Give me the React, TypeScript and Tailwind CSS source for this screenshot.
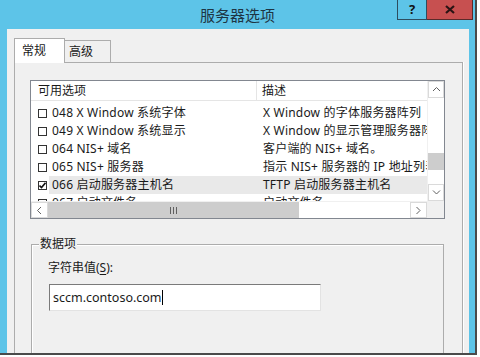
import React from 'react'

interface Row {
  name: string
  desc: string
  checked?: boolean
  selected?: boolean
}

const rows: Row[] = [
  { name: '048 X Window 系统字体', desc: 'X Window 的字体服务器阵列' },
  { name: '049 X Window 系统显示', desc: 'X Window 的显示管理服务器阵列' },
  { name: '064 NIS+ 域名', desc: '客户端的 NIS+ 域名。' },
  { name: '065 NIS+ 服务器', desc: '指示 NIS+ 服务器的 IP 地址列表' },
  { name: '066 启动服务器主机名', desc: 'TFTP 启动服务器主机名', checked: true, selected: true },
  { name: '067 启动文件名', desc: '启动文件名' },
]

function Chevron({ dir }: { dir: 'up' | 'down' | 'left' | 'right' }) {
  const pts = {
    up: '1,5 4.5,1.5 8,5',
    down: '1,1.5 4.5,5 8,1.5',
    left: '5,1 1.5,4.5 5,8',
    right: '1.5,1 5,4.5 1.5,8',
  }[dir]
  const vert = dir === 'up' || dir === 'down'
  return (
    <svg width={vert ? 9 : 7} height={vert ? 7 : 9} viewBox={vert ? '0 0 9 7' : '0 0 7 9'}>
      <polyline points={pts} fill="none" stroke="#606060" strokeWidth="1" />
    </svg>
  )
}

function CheckBox({ checked }: { checked?: boolean }) {
  return (
    <div className="w-[9px] h-[9px] border border-[#333] bg-white flex items-center justify-center">
      {checked && (
        <svg width="7" height="7" viewBox="0 0 7 7">
          <polyline points="0.5,3.5 2.5,5.5 6.5,0.8" fill="none" stroke="#111" strokeWidth="1.6" />
        </svg>
      )}
    </div>
  )
}

export default function App() {
  return (
    <div className="w-[480px] h-[357px] bg-white overflow-hidden font-['Noto_Sans','Noto_Sans_CJK_SC',sans-serif] text-[#1a1a1a]">
      <div className="relative w-[477px] h-[355px] bg-[#5dc4e8] border-r-2 border-b-2 border-[#4a4a4a]">
        {/* title bar */}
        <div className="h-[29px] flex items-center justify-center text-[15px] leading-none text-[#1d3544] pt-[1px]">
          服务器选项
        </div>
        <div className="absolute top-0 left-[397px] flex">
          <div className="w-[30px] h-[20px] border border-t-0 border-[#2d4d5f] flex items-center justify-center text-[13px] font-bold leading-none text-[#111]">
            ?
          </div>
          <div className="w-[46px] h-[20px] bg-[#c75050] border border-l-0 border-t-0 border-[#5a2a2a] flex items-center justify-center">
            <svg width="10" height="9" viewBox="0 0 10 9">
              <path d="M1 1 L9 8 M9 1 L1 8" stroke="#2a1414" strokeWidth="2.2" />
            </svg>
          </div>
        </div>

        {/* client area */}
        <div className="ml-[7px] w-[462px] h-[324px] bg-[#f0f0f0] overflow-hidden pl-[7px] pt-[9px]">
          {/* tabs */}
          <div className="flex items-end h-[24px] text-[12px]">
            <div className="relative z-10 w-[51px] h-[25px] -mb-px bg-white border border-b-0 border-[#acacac] pl-[7px] pt-[3px] leading-[18px]">
              常规
            </div>
            <div className="w-[46px] h-[22px] bg-[#f0f0f0] border border-l-0 border-b-0 border-[#acacac] pl-[4px] pt-[2px] leading-[18px]">
              高级
            </div>
          </div>

          {/* tab page */}
          <div className="w-[449px] h-[300px] border border-[#acacac] shadow-[1px_0_0_#ffffff] bg-[#f0f0f0] pt-[17px] pl-[15px] text-[12px]">
            {/* list view */}
            <div className="w-[415px] h-[139px] border border-[#828790] bg-white flex flex-col">
              <div className="flex h-[120px]">
                <div className="w-[396px] overflow-hidden">
                  <div className="flex h-[20px] border-b border-[#e5e5e5] leading-[19px]">
                    <div className="w-[226px] shrink-0 border-r border-[#e5e5e5] pl-[7px]">可用选项</div>
                    <div className="pl-[5px] whitespace-nowrap">描述</div>
                  </div>
                  <div className="pt-[3px]">
                    {rows.map((r) => (
                      <div key={r.name} className="flex h-[18px] items-center">
                        <div className="w-[18px] shrink-0 pl-[7px]">
                          <CheckBox checked={r.checked} />
                        </div>
                        <div
                          className={`flex flex-1 h-full items-center leading-[18px] whitespace-nowrap ${
                            r.selected ? 'bg-[#e9e9e9]' : ''
                          }`}
                        >
                          <div className="w-[208px] shrink-0 pl-[3px] tracking-[0.2px]">{r.name}</div>
                          <div className="pl-[6px] tracking-[0.2px]">{r.desc}</div>
                        </div>
                      </div>
                    ))}
                  </div>
                </div>
                {/* vertical scrollbar */}
                <div className="w-[17px] flex flex-col bg-white border-l border-[#f0f0f0]">
                  <div className="h-[17px] border border-[#dadada] flex items-center justify-center">
                    <Chevron dir="up" />
                  </div>
                  <div className="h-[55px]" />
                  <div className="h-[17px] bg-[#cdcdcd]" />
                  <div className="flex-1" />
                  <div className="h-[17px] border border-[#dadada] flex items-center justify-center">
                    <Chevron dir="down" />
                  </div>
                </div>
              </div>
              <div className="flex h-[17px]">
                {/* horizontal scrollbar */}
                <div className="w-[396px] flex bg-white border-t border-[#f0f0f0]">
                  <div className="w-[17px] border border-[#dadada] flex items-center justify-center">
                    <Chevron dir="left" />
                  </div>
                  <div className="w-[251px] bg-[#cdcdcd] flex items-center justify-center gap-[2px]">
                    <div className="w-px h-[7px] bg-[#606060]" />
                    <div className="w-px h-[7px] bg-[#606060]" />
                    <div className="w-px h-[7px] bg-[#606060]" />
                  </div>
                  <div className="flex-1" />
                  <div className="w-[17px] border border-[#dadada] flex items-center justify-center">
                    <Chevron dir="right" />
                  </div>
                </div>
                <div className="w-[17px] bg-[#f0f0f0]" />
              </div>
            </div>

            {/* group box */}
            <div className="mt-[25px] ml-px w-[413px] h-[140px] border border-[#acacac] shadow-[inset_1px_1px_0_#ffffff] pl-[16px]">
              <div className="-mt-[9px] -ml-[9px] w-fit px-[1px] bg-[#f0f0f0] leading-[16px]">数据项</div>
              <div className="mt-[8px] leading-[16px]">
                字符串值(<span className="underline underline-offset-2">S</span>):
              </div>
              <div className="mt-[8px] ml-px w-[272px] h-[27px] bg-white border border-[#e3e3e3] border-t-[#7a7a7a] border-l-[#7a7a7a] flex items-center pl-[3px] text-[12.5px]">
                <span className="leading-[18px]">sccm.contoso.com</span>
                <div className="w-px h-[15px] bg-black" />
              </div>
            </div>
          </div>
        </div>
      </div>
    </div>
  )
}
